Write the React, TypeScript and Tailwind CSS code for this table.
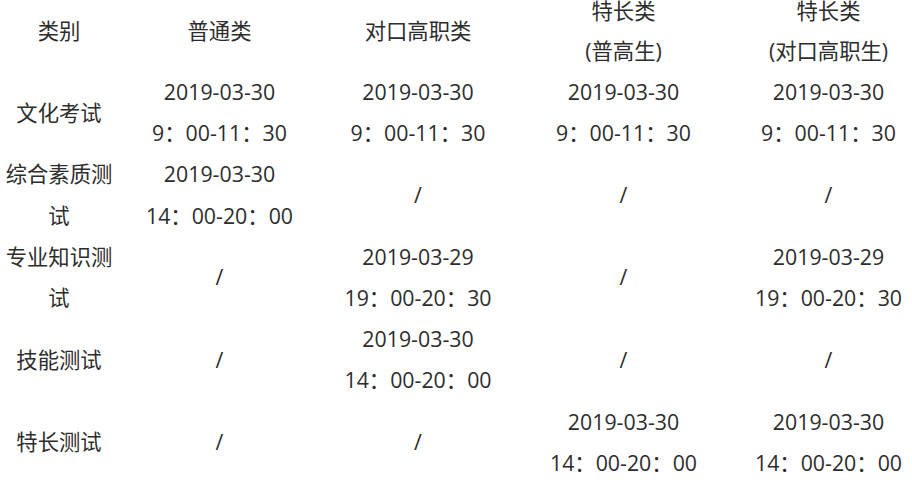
const headers = [
  ['类别'],
  ['普通类'],
  ['对口高职类'],
  ['特长类', '(普高生)'],
  ['特长类', '(对口高职生)'],
];

const rows: string[][][] = [
  [['文化考试'], ['2019-03-30', '9：00-11：30'], ['2019-03-30', '9：00-11：30'], ['2019-03-30', '9：00-11：30'], ['2019-03-30', '9：00-11：30']],
  [['综合素质测试'], ['2019-03-30', '14：00-20：00'], ['/'], ['/'], ['/']],
  [['专业知识测试'], ['/'], ['2019-03-29', '19：00-20：30'], ['/'], ['2019-03-29', '19：00-20：30']],
  [['技能测试'], ['/'], ['2019-03-30', '14：00-20：00'], ['/'], ['/']],
  [['特长测试'], ['/'], ['/'], ['2019-03-30', '14：00-20：00'], ['2019-03-30', '14：00-20：00']],
];

const colWidths = ['w-[118px]', 'w-[203px]', 'w-[194px]', 'w-[217px]', 'w-[193px]'];

const Cell = ({ lines }: { lines: string[] }) => (
  <td className="p-0 text-center align-middle">
    {lines.map((line, i) => (
      <p key={i}>{line}</p>
    ))}
  </td>
);

export default function App() {
  return (
    <div className="w-[912px] h-[489px] overflow-hidden bg-white">
      <table
        className="-mt-[9px] table-fixed border-collapse text-[21.33px] text-[#2d2d2d] w-[925px]"
        style={{ fontFamily: '"Open Sans", "Noto Sans CJK SC", sans-serif' }}
      >
        <colgroup>
          {colWidths.map((w, i) => (
            <col key={i} className={w} />
          ))}
        </colgroup>
        <thead className="leading-[40px]">
          <tr>
            {headers.map((h, i) => (
              <th key={i} className="p-0 text-center align-middle font-normal">
                {h.map((line, j) => (
                  <p key={j}>{line}</p>
                ))}
              </th>
            ))}
          </tr>
        </thead>
        <tbody className="leading-[41.2px]">
          {rows.map((row, i) => (
            <tr key={i} className="h-[82.4px]">
              {row.map((cell, j) => (
                <Cell key={j} lines={cell} />
              ))}
            </tr>
          ))}
        </tbody>
      </table>
    </div>
  );
}
